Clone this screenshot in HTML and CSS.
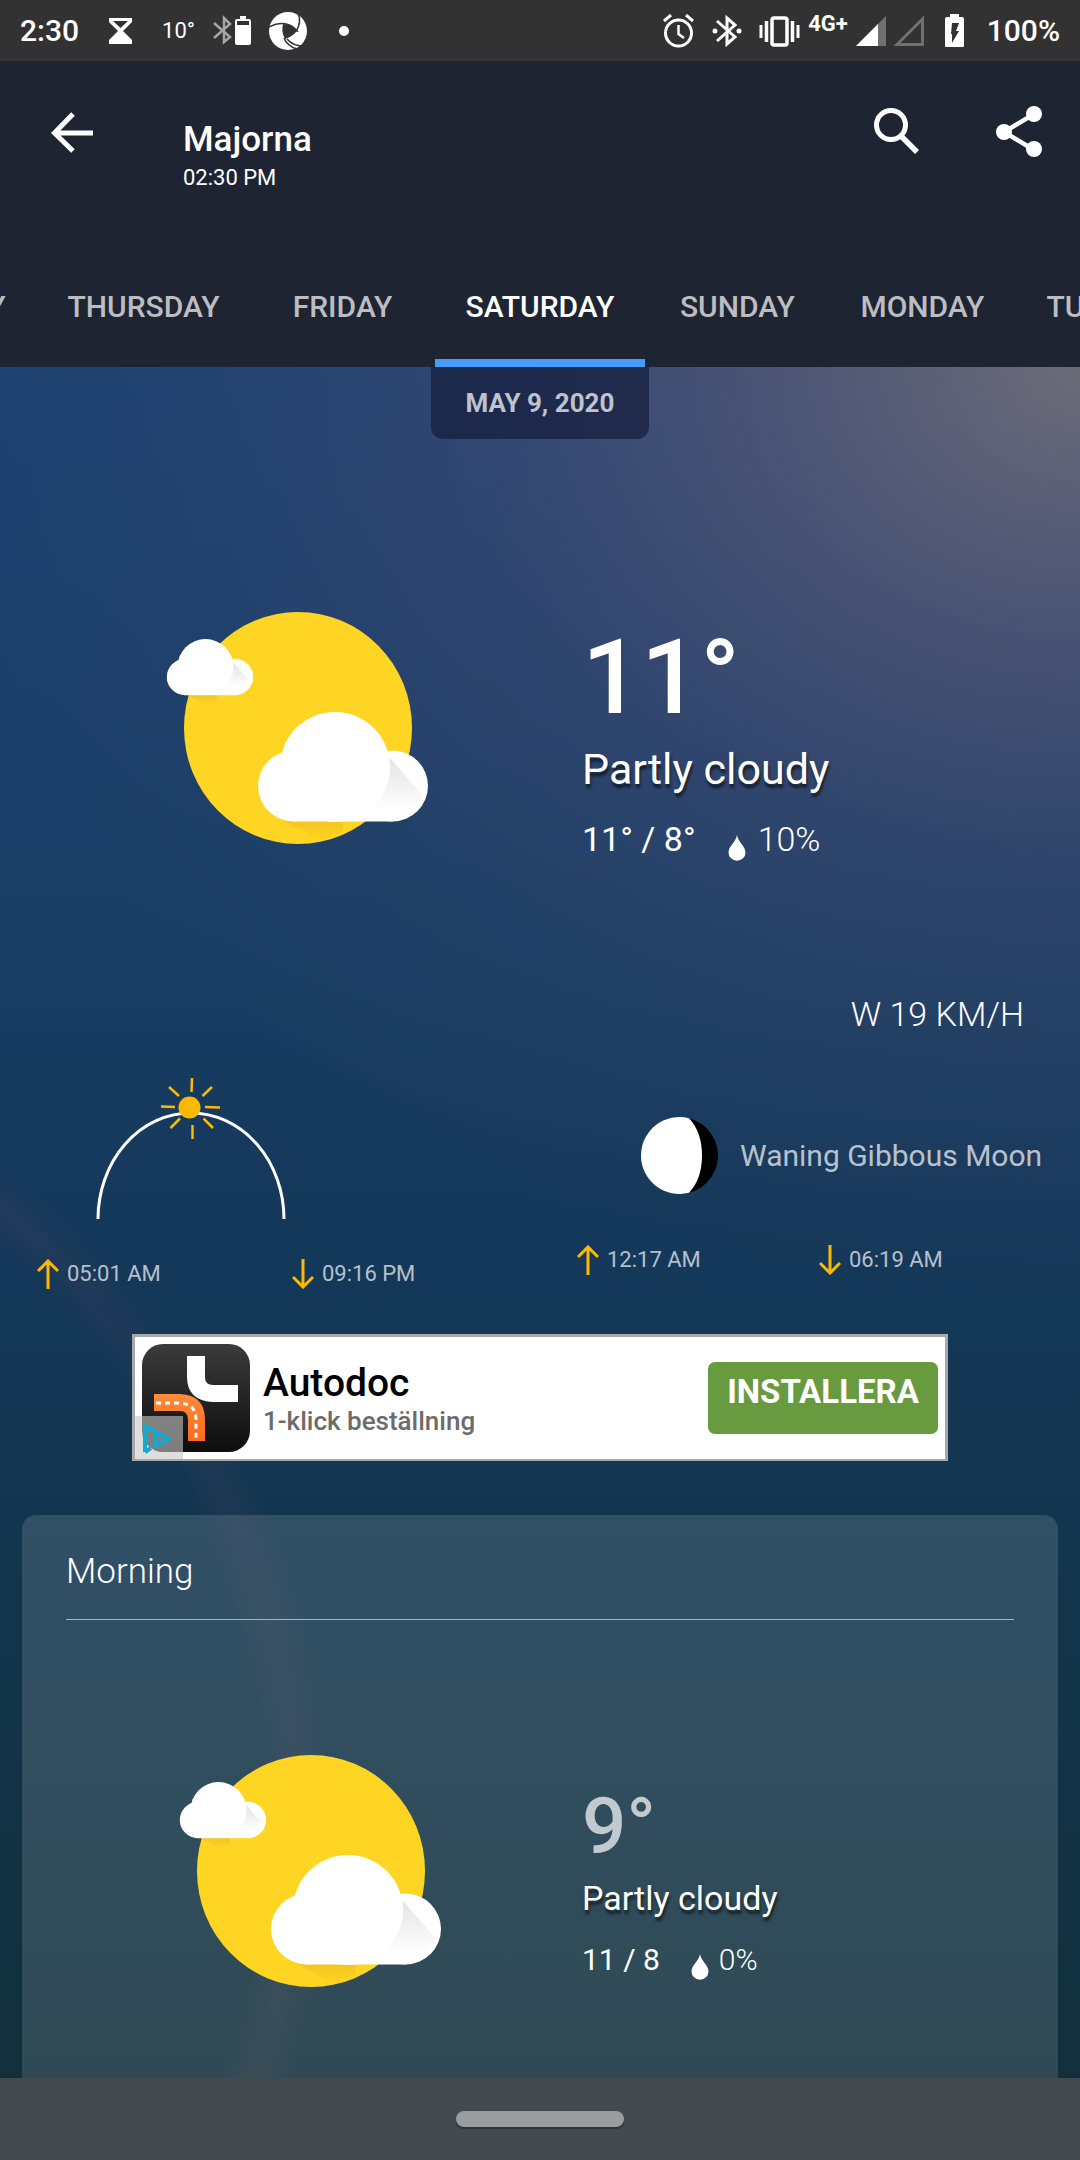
FILE: index.html
```html
<!DOCTYPE html>
<html lang="en">
<head>
<meta charset="utf-8">
<meta name="viewport" content="width=device-width, initial-scale=1">
<title>Majorna weather</title>
<link rel="stylesheet" href="styles.css">
</head>
<body>
<svg class="defs" width="0" height="0" aria-hidden="true">
  <defs>
    <linearGradient id="lobe-shade" x1="0" y1="0" x2="0" y2="1"><stop offset="0" stop-color="#e4e4e4"/><stop offset="1" stop-color="#fff"/></linearGradient>
    <linearGradient id="sun-shade" x1="0" y1="0" x2="0" y2="1"><stop offset="0" stop-color="#f3c620"/><stop offset="1" stop-color="#fdd222"/></linearGradient>
  </defs>
  <symbol id="partly-cloudy" viewBox="0 0 262 234">
    <ellipse cx="132" cy="117" rx="114" ry="116" fill="#ffd523"/>
    <path d="M22 84H51V90Q44 96 34 91Z" fill="url(#sun-shade)"/>
    <path d="M118 210H177V220Q160 230 148 226Z" fill="url(#sun-shade)"/>
    <g fill="#fff">
      <circle cx="19" cy="66" r="18.2"/><circle cx="69" cy="66" r="18.2"/><rect x="19" y="64" width="50" height="20.2"/>
      <circle cx="127.500" cy="175" r="35.5"/><circle cx="226.500" cy="175" r="35.5"/><rect x="128" y="170" width="99" height="40.500"/>
    </g>
    <path d="M67 51L82 68L78 77L57 77Z" fill="url(#lobe-shade)"/>
    <path d="M224 147L256 184Q250 199 240 200L205 200Z" fill="url(#lobe-shade)"/>
    <g fill="#fff"><circle cx="39.500" cy="56" r="28"/><circle cx="169" cy="156" r="55"/></g>
  </symbol>
  <symbol id="drop" viewBox="0 0 18 26"><path d="M9 0C10 7 17.500 11 17.500 17.500A8.500 8.300 0 0 1 .5 17.500C.5 11 8 7 9 0Z" fill="#fff"/></symbol>
  <symbol id="up" viewBox="0 0 22 30"><path d="M11 30V2M1 12L11 2L21 12" fill="none" stroke="#fdb900" stroke-width="3"/></symbol>
  <symbol id="down" viewBox="0 0 22 30"><path d="M11 0V28M1 18L11 28L21 18" fill="none" stroke="#fdb900" stroke-width="3"/></symbol>
</svg>

<div class="status-bar">
  <div class="status-left">
    <span>2:30</span>
    <svg width="50" height="30" viewBox="0 0 50 30"><path d="M14 2H37V6L28 15L37 24V28H14V24L23 15L14 6Z" fill="#fff"/><path d="M18 5H33L25.500 12Z" fill="#323232"/></svg>
    <span class="status-temp">10°</span>
    <svg width="42" height="32" viewBox="0 0 42 32"><path d="M3 8L19 22L13 27V3L19 9L3 23" fill="none" stroke="#a6a6a6" stroke-width="2.500"/><path d="M29 1H35V4H38Q40 4 40 6V28Q40 30 38 30H26Q24 30 24 28V6Q24 4 26 4H29Z" fill="#fff"/><path d="M26 6H38V10H26Z" fill="#323232"/></svg>
    <svg width="38" height="38" viewBox="0 0 38 38"><circle cx="19" cy="19" r="19" fill="#fff"/><g fill="none" stroke="#323232" stroke-width="1.500"><path d="M0 15Q14 8 24 15Q28 18 29 20"/><path d="M29 1Q33 11 27 19"/><path d="M15 26Q18 34 28 37"/><path d="M18 27Q24 34 34 34"/></g><path d="M14 12Q24 12 28 19Q23 25 16 27Q12 20 14 12Z" fill="#323232"/></svg>
    <svg width="28" height="12" viewBox="0 0 28 12"><circle cx="21" cy="6" r="5" fill="#fff"/></svg>
  </div>
  <div class="status-right">
    <svg width="38" height="34" viewBox="0 0 38 34"><g fill="none" stroke="#fff" stroke-width="3"><circle cx="15.500" cy="19" r="13"/><path d="M15.500 11V20L21 24" stroke-width="2.500"/><path d="M1 7L8 1M30 7L23 1"/></g></svg>
    <svg width="38" height="34" viewBox="0 0 38 34"><path d="M8 7L26 23L18 30V4L26 11L8 27" fill="none" stroke="#fff" stroke-width="3"/><circle cx="6" cy="17" r="2.500" fill="#fff"/><circle cx="30" cy="17" r="2.500" fill="#fff"/></svg>
    <svg width="45" height="34" viewBox="0 0 45 34"><rect x="17" y="4" width="15" height="27" rx="2" fill="none" stroke="#fff" stroke-width="3.500"/><path d="M11.500 7V28M37.500 7V28" stroke="#fff" stroke-width="3.500"/><path d="M6 11V24M43 11V24" stroke="#fff" stroke-width="3"/></svg>
    <span class="status-net">4G+</span>
    <svg width="77" height="34" viewBox="0 0 77 34"><path d="M0 32L30 2V32Z" fill="#707070"/><path d="M0 32L22 10V32Z" fill="#fff"/><path d="M41 30.500L66.500 5V30.500Z" fill="none" stroke="#707070" stroke-width="3"/></svg>
    <svg width="38" height="34" viewBox="0 0 38 34"><path d="M9 0H18V3H21Q23 3 23 5V32Q23 33 22 33H5Q4 33 4 32V5Q4 3 6 3H9Z" fill="#fff"/><path d="M11 9H18L15 17H18L11 29V20H10Z" fill="#323232"/></svg>
    <span>100%</span>
  </div>
</div>

<header class="app-bar">
  <div class="toolbar">
    <button class="icon-button" type="button" aria-label="Back"><svg width="44" height="52" viewBox="0 0 44 52"><path d="M42 27H5M22 8L3.500 27L22 45" fill="none" stroke="#fff" stroke-width="5"/></svg></button>
    <div class="place">
      <h1>Majorna</h1>
      <p>02:30 PM</p>
    </div>
    <div class="actions">
      <button class="icon-button" type="button" aria-label="Search"><svg width="46" height="52" viewBox="0 0 46 52"><circle cx="17" cy="19" r="14.500" fill="none" stroke="#fff" stroke-width="5"/><path d="M28 31L43 46" stroke="#fff" stroke-width="5.500"/></svg></button>
      <button class="icon-button" type="button" aria-label="Share"><svg width="46" height="52" viewBox="0 0 46 52"><path d="M38 8L8 26L38 44" fill="none" stroke="#fff" stroke-width="4.500"/><g fill="#fff"><circle cx="38" cy="8" r="8"/><circle cx="8" cy="26" r="8"/><circle cx="38" cy="43" r="8"/></g></svg></button>
    </div>
  </div>
  <nav class="tabs" aria-label="Days">
    <div class="tabs-before"><a href="#wed">WEDNESDAY</a><a href="#thu">THURSDAY</a><a href="#fri">FRIDAY</a></div>
    <a class="selected" href="#sat" aria-current="page">SATURDAY</a>
    <div class="tabs-after"><a href="#sun">SUNDAY</a><a href="#mon">MONDAY</a><a href="#tue">TUESDAY</a></div>
  </nav>
</header>

<main>
  <p class="date">MAY 9, 2020</p>

  <section class="forecast today">
    <svg class="weather-icon" role="img" aria-label="Partly cloudy"><use href="#partly-cloudy"/></svg>
    <div class="reading">
      <p class="temp">11°</p>
      <p class="summary">Partly cloudy</p>
      <p class="range"><span>11° / 8°</span><svg class="drop"><use href="#drop"/></svg><span class="rain">10%</span></p>
    </div>
  </section>

  <p class="wind">W 19 KM/H</p>

  <section class="astro">
    <div class="sun">
      <svg class="sun-arc" width="204" height="144" viewBox="0 0 204 144">
        <path d="M8 143A93 106 0 0 1 194 143" fill="none" stroke="#fff" stroke-width="3"/>
        <circle cx="99.500" cy="31.500" r="11" fill="#fdb900"/>
        <path d="M102 2L101.500 16M102.500 49V63M71 30.500L85 31M115 31L130 31.500M79 11L89 20M122 11L112.500 20M80.500 52L90 42.500M123 52L113.500 42.500" stroke="#fdb900" stroke-width="2.500"/>
      </svg>
      <div class="times">
        <span><svg class="arrow"><use href="#up"/></svg>05:01 AM</span>
        <span><svg class="arrow"><use href="#down"/></svg>09:16 PM</span>
      </div>
    </div>
    <div class="moon">
      <p class="phase">
        <svg width="77" height="77" viewBox="0 0 77 77"><circle cx="38.500" cy="38.500" r="38.500" fill="#000"/><path d="M48 1.200A38.500 38.500 0 1 0 48 75.800Q61 62 61 38.500Q61 15 48 1.200Z" fill="#fff"/></svg>
        <span>Waning Gibbous Moon</span>
      </p>
      <div class="times">
        <span><svg class="arrow"><use href="#up"/></svg>12:17 AM</span>
        <span><svg class="arrow"><use href="#down"/></svg>06:19 AM</span>
      </div>
    </div>
  </section>

  <aside class="ad">
    <div class="ad-icon">
      <svg width="108" height="108" viewBox="0 0 108 108">
        <defs>
          <linearGradient id="tile" x1="0" y1="0" x2="0" y2="1"><stop offset="0" stop-color="#3b3b3b"/><stop offset="1" stop-color="#0d0d0d"/></linearGradient>
          <linearGradient id="road" x1="0" y1="0" x2="0" y2="1"><stop offset="0" stop-color="#ff8a3c"/><stop offset="1" stop-color="#fb6c1c"/></linearGradient>
        </defs>
        <rect width="108" height="108" rx="21" fill="url(#tile)"/>
        <path d="M45 12H63V33Q63 41 71 41H96V58H70Q45 56 45 33Z" fill="#fff"/>
        <path d="M12 50H38Q63 51 63 76V97H46V76Q46 67 38 67H12Z" fill="url(#road)"/>
        <path d="M14 59H38Q54 60 54 76V97" fill="none" stroke="#fff" stroke-width="3" stroke-dasharray="5 4"/>
      </svg>
      <a class="ad-choices" href="#adchoices" aria-label="AdChoices"><svg width="48" height="43" viewBox="0 0 48 43"><path d="M10 36V10L34 23L20 30V17M10 36L16 32" fill="none" stroke="#14a9cf" stroke-width="4" stroke-linejoin="round"/></svg></a>
    </div>
    <div class="ad-text">
      <p class="ad-name">Autodoc</p>
      <p class="ad-tagline">1-klick beställning</p>
    </div>
    <button class="install" type="button">INSTALLERA</button>
  </aside>

  <section class="card">
    <h2>Morning</h2>
    <div class="forecast part">
      <svg class="weather-icon" role="img" aria-label="Partly cloudy"><use href="#partly-cloudy"/></svg>
      <div class="reading">
        <p class="temp">9°</p>
        <p class="summary">Partly cloudy</p>
        <p class="range"><span>11 / 8</span><svg class="drop"><use href="#drop"/></svg><span class="rain">0%</span></p>
      </div>
    </div>
  </section>
</main>

<footer class="system-nav"><button class="home-handle" type="button" aria-label="Home"></button></footer>
</body>
</html>
```

FILE: styles.css
```css
* { box-sizing: border-box; }

body {
  margin: 0;
  min-height: 100vh;
  display: flex;
  flex-direction: column;
  font-family: Roboto, "Liberation Sans", sans-serif;
  color: #fff;
  background: #13303c;
}

h1, h2, p { margin: 0; font-weight: 400; }
svg { display: block; flex: none; }
a { color: inherit; text-decoration: none; }
button { border: 0; padding: 0; background: none; font: inherit; color: inherit; }
.defs { position: absolute; }

/* Status bar */
.status-bar {
  height: 61px;
  padding: 0 20px;
  display: flex;
  justify-content: space-between;
  background: #323232;
  font-size: 30px;
  font-weight: 500;
  line-height: 62px;
}
.status-left, .status-right { display: flex; align-items: center; }
.status-left { gap: 16px; }
.status-right { gap: 8px; }
.status-temp { width: 34px; font-size: 22px; font-weight: 400; text-align: right; }
.status-net { align-self: flex-start; font-size: 22px; font-weight: 700; line-height: 48px; }

/* App bar */
.app-bar { background: #1e2431; }
.toolbar {
  min-height: 186px;
  padding: 45px 38px 0 51px;
  display: flex;
  align-items: flex-start;
}
.icon-button { display: block; }
.place { margin-left: 88px; padding-top: 14px; }
.place h1 { font-size: 35px; font-weight: 500; line-height: 40px; }
.place p { font-size: 22px; line-height: 30px; padding-top: 3px; }
.actions { margin-left: auto; display: flex; gap: 76px; }

.tabs {
  display: grid;
  grid-template-columns: minmax(0, 1fr) auto minmax(0, 1fr);
  overflow: hidden;
  font-size: 30px;
  font-weight: 500;
  line-height: 120px;
  color: #bcbdc1;
}
.tabs-before, .tabs-after { display: flex; }
.tabs-before { justify-content: flex-end; }
.tabs a {
  flex: none;
  min-width: 184px;
  padding: 0 31px;
  text-align: center;
}
.tabs .selected { color: #fff; box-shadow: inset 0 -8px #459bff; }

/* Sky */
main {
  flex: 1;
  display: flex;
  flex-direction: column;
  background:
    radial-gradient(circle at -500px 1460px, transparent 765px, rgba(120, 70, 100, .1) 790px, rgba(120, 70, 100, .1) 802px, transparent 830px),
    radial-gradient(ellipse 1150px 950px at 100% 0, rgba(128, 118, 122, .8), rgba(112, 98, 122, .54) 28%, rgba(92, 84, 118, .32) 52%, rgba(80, 80, 115, .14) 76%, transparent),
    linear-gradient(180deg, #1b4171 0, #1b3f6a 350px, #183c61 650px, #143859 900px, #12354c 1250px, #12303c 100%);
}
.date {
  align-self: center;
  padding: 0 35px;
  border-radius: 0 0 12px 12px;
  background: rgba(20, 28, 60, .7);
  color: #bfc3cd;
  font-size: 26px;
  font-weight: 700;
  line-height: 72px;
}

/* Forecast */
.forecast { display: grid; grid-template-columns: 1fr 1fr; }
.weather-icon { width: 262px; height: 234px; justify-self: center; }
.reading { padding-left: 42px; }
.temp { font-weight: 500; }
.summary { text-shadow: 1px 4px 3px rgba(0, 0, 0, .6); }
.range { display: flex; }
.drop { width: 18px; height: 26px; align-self: flex-end; }
.rain { font-weight: 300; }

.today { margin-top: 172px; }
.today .weather-icon { margin-left: 54px; }
.today .reading { padding-top: 15px; }
.today .temp { font-size: 104px; line-height: 104px; }
.today .summary { font-size: 43px; line-height: 60px; margin-top: 9px; }
.today .range { font-size: 34px; line-height: 44px; margin-top: 18px; }
.today .drop { margin: 0 12px 0 32px; }

.wind {
  margin-top: 131px;
  padding-right: 56px;
  font-size: 34px;
  font-weight: 300;
  line-height: 44px;
  text-align: right;
}

/* Sun and moon */
.astro {
  margin-top: 40px;
  display: grid;
  grid-template-columns: 1fr 1fr;
  color: rgba(255, 255, 255, .7);
}
.sun, .moon { padding-left: 37px; }
.sun-arc { margin-left: 53px; }
.sun .times { grid-template-columns: 255px auto; margin-top: 39px; }
.moon { padding-top: 41px; }
.phase {
  margin-left: 64px;
  display: flex;
  align-items: center;
  gap: 22px;
  font-size: 30px;
  line-height: 40px;
  white-space: nowrap;
}
.moon .times { grid-template-columns: 242px auto; margin-top: 51px; }
.times { display: grid; font-size: 22px; line-height: 30px; }
.times span { display: flex; gap: 8px; }
.arrow { width: 22px; height: 30px; }

/* Ad banner */
.ad {
  align-self: center;
  width: 816px;
  max-width: 100%;
  margin-top: 45px;
  padding: 7px;
  display: flex;
  align-items: flex-start;
  background: #fff;
  border: solid #a8a8a8;
  border-width: 3px 3px 2px;
}
.ad-icon { position: relative; }
.ad-choices { position: absolute; left: -7px; bottom: -7px; background: rgba(200, 200, 200, .6); }
.ad-text { margin-left: 13px; padding-top: 16px; }
.ad-name { color: #000; font-size: 39px; font-weight: 500; line-height: 46px; }
.ad-tagline { color: #6b6b6b; font-size: 26px; font-weight: 500; line-height: 30px; }
.install {
  margin: 18px 0 0 auto;
  width: 230px;
  height: 72px;
  padding-bottom: 14px;
  border-radius: 7px;
  background: #689a40;
  font-size: 33px;
  font-weight: 700;
}

/* Part-of-day card */
.card {
  flex: 1;
  margin: 54px 22px 0;
  padding: 34px 44px 80px;
  border-radius: 14px 14px 0 0;
  background: rgba(255, 255, 255, .13);
}
.card h2 {
  padding-bottom: 24px;
  border-bottom: 1px solid #a9b6c0;
  font-size: 35px;
  font-weight: 300;
  line-height: 46px;
}
.part { margin-top: 134px; }
.part .weather-icon { margin-left: 14px; }
.part .reading { padding-top: 34px; }
.part .temp { font-size: 78px; line-height: 78px; color: rgba(255, 255, 255, .7); }
.part .summary { font-size: 34px; line-height: 44px; margin-top: 10px; }
.part .range { font-size: 30px; line-height: 40px; margin-top: 20px; }
.part .drop { margin: 0 10px 0 31px; }

/* System navigation */
.system-nav {
  height: 82px;
  display: flex;
  align-items: center;
  justify-content: center;
  background: #434a4f;
}
.home-handle {
  width: 168px;
  height: 16px;
  border-radius: 8px;
  background: #9a9d9f;
  box-shadow: 0 2px 1px #2f3437;
}
```
